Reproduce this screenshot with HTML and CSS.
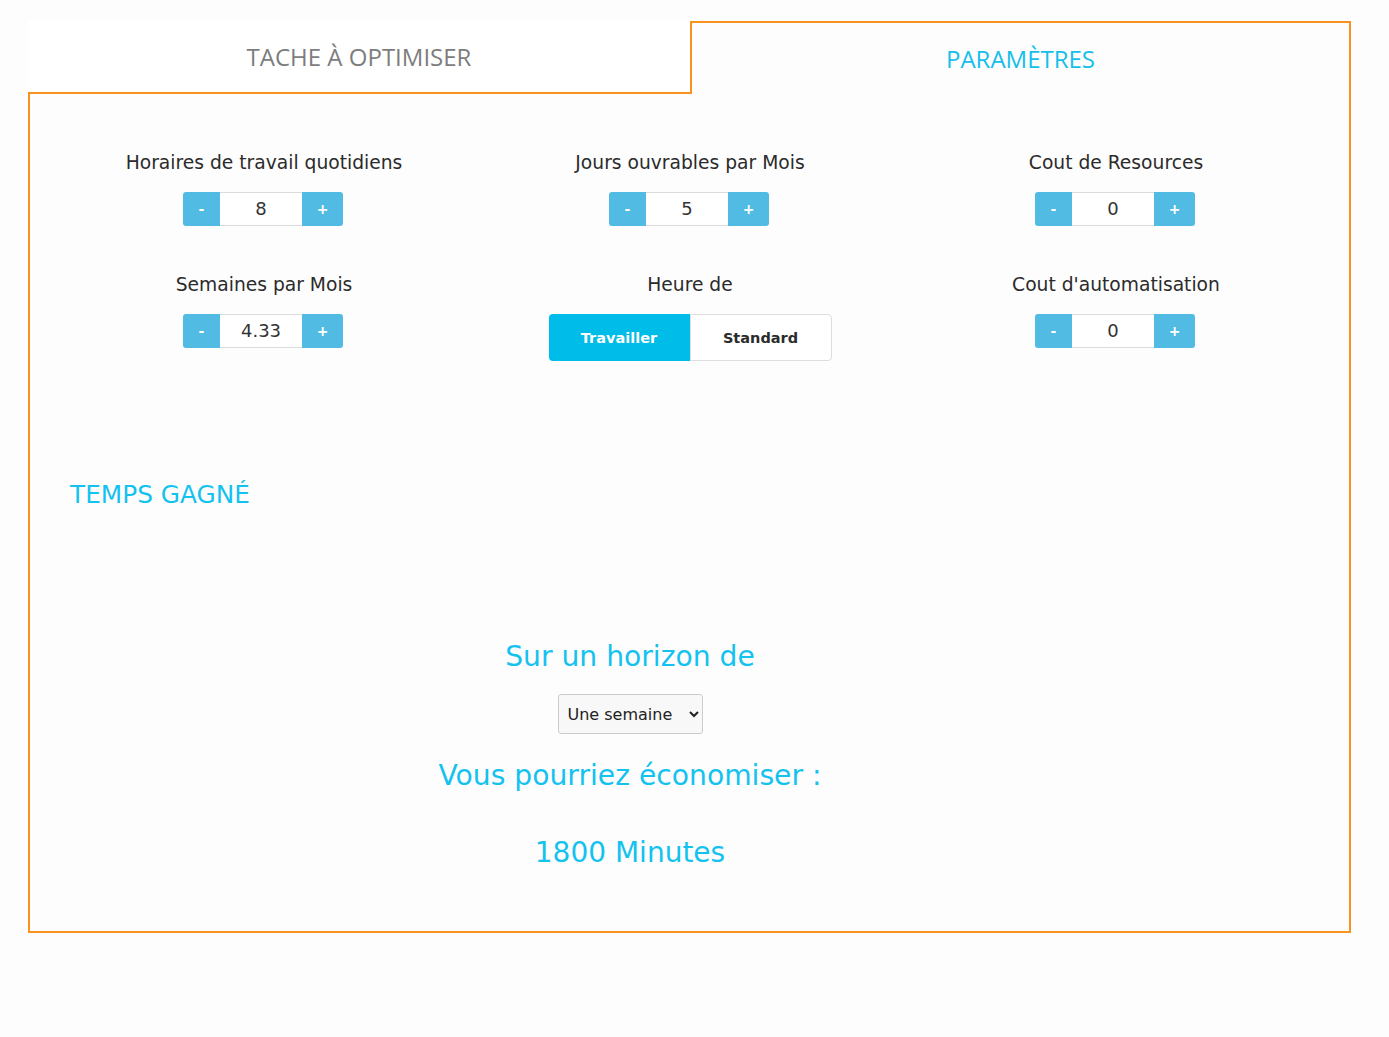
FILE: index.html
```html
<!DOCTYPE html>
<html lang="fr">
<head>
<meta charset="utf-8">
<title>Paramètres</title>
<link rel="stylesheet" href="styles.css">
</head>
<body>
<div class="wrapper">
  <div class="tabs">
    <div class="tab">TACHE À OPTIMISER</div>
    <div class="tab tab-active">PARAMÈTRES</div>
  </div>
  <div class="panel">
    <div class="params">
      <div class="field">
        <div class="label">Horaires de travail quotidiens</div>
        <div class="spinner">
          <button class="spin-btn spin-minus">-</button>
          <div class="spin-value">8</div>
          <button class="spin-btn spin-plus">+</button>
        </div>
      </div>
      <div class="field">
        <div class="label">Jours ouvrables par Mois</div>
        <div class="spinner">
          <button class="spin-btn spin-minus">-</button>
          <div class="spin-value">5</div>
          <button class="spin-btn spin-plus">+</button>
        </div>
      </div>
      <div class="field">
        <div class="label">Cout de Resources</div>
        <div class="spinner">
          <button class="spin-btn spin-minus">-</button>
          <div class="spin-value">0</div>
          <button class="spin-btn spin-plus">+</button>
        </div>
      </div>
      <div class="field">
        <div class="label">Semaines par Mois</div>
        <div class="spinner">
          <button class="spin-btn spin-minus">-</button>
          <div class="spin-value">4.33</div>
          <button class="spin-btn spin-plus">+</button>
        </div>
      </div>
      <div class="field">
        <div class="label">Heure de</div>
        <div class="toggle">
          <button class="toggle-btn toggle-on">Travailler</button>
          <button class="toggle-btn toggle-off">Standard</button>
        </div>
      </div>
      <div class="field">
        <div class="label">Cout d'automatisation</div>
        <div class="spinner">
          <button class="spin-btn spin-minus">-</button>
          <div class="spin-value">0</div>
          <button class="spin-btn spin-plus">+</button>
        </div>
      </div>
    </div>
    <div class="results">
      <div class="results-title">TEMPS GAGNÉ</div>
      <div class="horizon">
        <div class="big-text">Sur un horizon de</div>
        <select class="period">
          <option>Une semaine</option>
          <option>Un mois</option>
          <option>Une année</option>
        </select>
        <div class="big-text save">Vous pourriez économiser :</div>
        <div class="big-text total">1800 Minutes</div>
      </div>
    </div>
  </div>
</div>
</body>
</html>
```
FILE: styles.css
```css
html, body {
  margin: 0;
  padding: 0;
  background: #fdfdfd;
}

body {
  font-family: "DejaVu Sans", sans-serif;
  color: #2b2b2b;
}

.wrapper {
  margin: 21px 38px 0 28px;
}

.tabs {
  display: flex;
}

.tab {
  flex: 0 0 662px;
  height: 71px;
  line-height: 71px;
  text-align: center;
  font-family: "Open Sans", sans-serif;
  font-size: 24px;
  color: #7d7d7d;
  background: #ffffff;
  border-bottom: 2px solid #f7931e;
}

.tab-active {
  flex: 1 1 auto;
  color: #14bfeb;
  background: #fdfdfd;
  border: 2px solid #f7931e;
  border-bottom: none;
}

.panel {
  border: 2px solid #f7931e;
  border-top: none;
  padding: 58px 20px 61px 21px;
}

.params {
  display: grid;
  grid-template-columns: repeat(3, 426px);
  row-gap: 48px;
  align-items: start;
}

.field {
  display: flex;
  flex-direction: column;
  align-items: center;
}

.label {
  font-size: 18.7px;
  line-height: 22px;
  height: 22px;
  margin-bottom: 18px;
  color: #2b2b2b;
  white-space: nowrap;
}

.spinner {
  display: flex;
  height: 34px;
  margin-right: 2px;
}

.spin-btn {
  border: none;
  background: #51bbe4;
  color: #ffffff;
  font-family: "DejaVu Sans", sans-serif;
  font-weight: bold;
  font-size: 14px;
  padding: 0;
  height: 34px;
}

.spin-minus {
  width: 37px;
  border-radius: 3px 0 0 3px;
}

.spin-plus {
  width: 41px;
  border-radius: 0 3px 3px 0;
}

.spin-value {
  width: 82px;
  box-sizing: border-box;
  height: 34px;
  line-height: 32px;
  border: 1px solid #dcdcdc;
  border-left: none;
  border-right: none;
  background: #ffffff;
  text-align: center;
  font-size: 18px;
  color: #333333;
}

.toggle {
  display: flex;
  height: 47px;
}

.toggle-btn {
  width: 141px;
  height: 47px;
  font-family: "DejaVu Sans", sans-serif;
  font-weight: bold;
  font-size: 14.5px;
  padding: 0;
  box-sizing: border-box;
}

.toggle-on {
  background: #00bce8;
  color: #ffffff;
  border: none;
  border-radius: 4px 0 0 4px;
}

.toggle-off {
  width: 142px;
  background: #ffffff;
  color: #2b2b2b;
  border: 1px solid #dddddd;
  border-radius: 0 4px 4px 0;
}

.results {
  width: 1158px;
  margin-top: 119px;
}

.results-title {
  padding-left: 19px;
  font-size: 24.8px;
  line-height: 29px;
  color: #14c2ef;
}

.horizon {
  display: flex;
  flex-direction: column;
  align-items: center;
  margin-top: 131px;
}

.big-text {
  font-size: 28.2px;
  line-height: 34px;
  color: #14c2ef;
  white-space: nowrap;
}

.period {
  margin-top: 20px;
  width: 145px;
  height: 40px;
  padding: 0 4px 0 5px;
  font-family: "DejaVu Sans", sans-serif;
  font-size: 16px;
  color: #222222;
  background-color: #f8f8f8;
  border: 1px solid #cccccc;
  border-radius: 3px;
}

.save {
  margin-top: 25px;
}

.total {
  margin-top: 43px;
  font-size: 28px;
}
```
